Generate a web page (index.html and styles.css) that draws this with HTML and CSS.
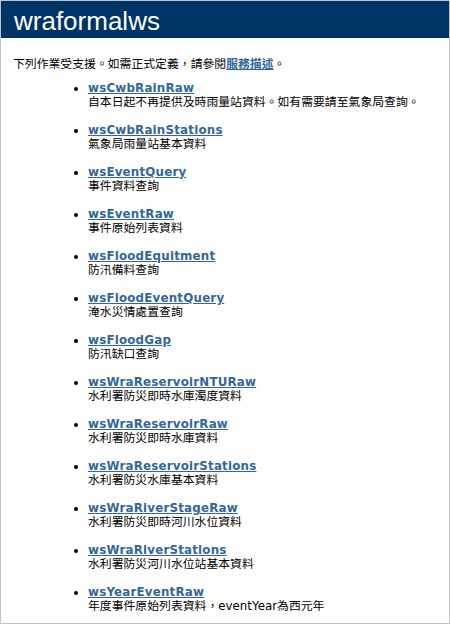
FILE: index.html
```html
<!DOCTYPE html>
<html lang="zh-Hant">
<head>
<meta charset="utf-8">
<title>wraformalws Web 服務</title>
<link rel="stylesheet" href="styles.css">
</head>
<body>
<div class="frame">
  <div class="heading1">wraformalws</div>
  <div class="content">
    <p class="intro">下列作業受支援。如需正式定義，請參閱<a href="#">服務描述</a>。</p>
    <ul class="ops">
      <li><a href="#">wsCwbRainRaw</a><span class="desc">自本日起不再提供及時雨量站資料。如有需要請至氣象局查詢。</span></li>
      <li><a href="#">wsCwbRainStations</a><span class="desc">氣象局雨量站基本資料</span></li>
      <li><a href="#">wsEventQuery</a><span class="desc">事件資料查詢</span></li>
      <li><a href="#">wsEventRaw</a><span class="desc">事件原始列表資料</span></li>
      <li><a href="#">wsFloodEquitment</a><span class="desc">防汛備料查詢</span></li>
      <li><a href="#">wsFloodEventQuery</a><span class="desc">淹水災情處置查詢</span></li>
      <li><a href="#">wsFloodGap</a><span class="desc">防汛缺口查詢</span></li>
      <li><a href="#">wsWraReservoirNTURaw</a><span class="desc">水利署防災即時水庫濁度資料</span></li>
      <li><a href="#">wsWraReservoirRaw</a><span class="desc">水利署防災即時水庫資料</span></li>
      <li><a href="#">wsWraReservoirStations</a><span class="desc">水利署防災水庫基本資料</span></li>
      <li><a href="#">wsWraRiverStageRaw</a><span class="desc">水利署防災即時河川水位資料</span></li>
      <li><a href="#">wsWraRiverStations</a><span class="desc">水利署防災河川水位站基本資料</span></li>
      <li><a href="#">wsYearEventRaw</a><span class="desc">年度事件原始列表資料，eventYear為西元年</span></li>
    </ul>
  </div>
</div>
</body>
</html>
```

FILE: styles.css
```css
html, body {
  margin: 0;
  padding: 0;
  background: #ffffff;
}

.frame {
  box-sizing: border-box;
  width: 450px;
  height: 624px;
  border: 1px solid #c4c4c4;
  overflow: hidden;
  font-family: "DejaVu Sans", "Noto Sans CJK TC", sans-serif;
  font-size: 11.85px;
  line-height: 14px;
  color: #000000;
}

.heading1 {
  height: 37px;
  box-sizing: border-box;
  padding: 5px 0 2px 13px;
  background: #003366;
  color: #ffffff;
  font-family: "Liberation Sans", Arial, sans-serif;
  font-size: 26px;
  line-height: 30px;
  font-weight: normal;
}

.content {
  padding-left: 12px;
}

.intro {
  margin: 19px 0 0 0;
}

a {
  color: #336699;
  font-weight: bold;
  text-decoration: underline;
}

.ops a {
  letter-spacing: 0.2px;
}

.ops {
  margin: 10px 0 0 0;
  padding-left: 75px;
  list-style: disc;
}

.ops li {
  margin-bottom: 14px;
}

.desc {
  display: block;
  letter-spacing: 0;
}
```
